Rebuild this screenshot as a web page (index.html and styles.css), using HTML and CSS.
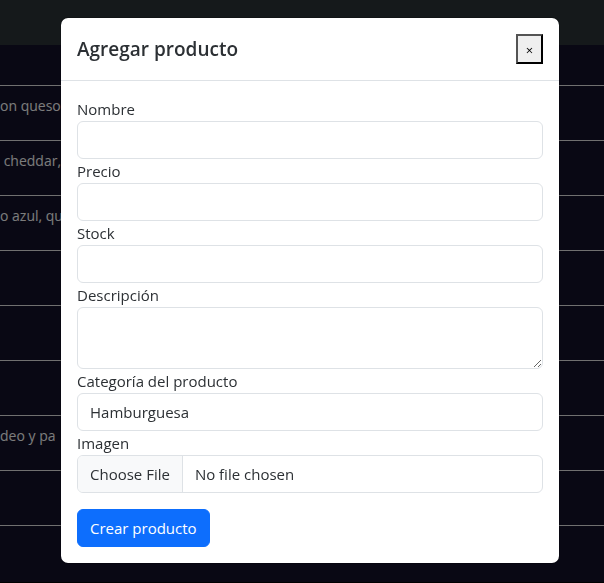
FILE: index.html
```html
<!DOCTYPE html>
<html lang="es">
<head>
<meta charset="utf-8">
<meta name="viewport" content="width=device-width, initial-scale=1">
<title>Agregar producto</title>
<link rel="stylesheet" href="styles.css">
</head>
<body>
<div class="page">
  <header class="navbar"></header>
  <table class="products">
    <tbody>
      <tr><td></td></tr>
      <tr><td>on queso</td></tr>
      <tr><td>&nbsp;cheddar,</td></tr>
      <tr><td>o azul, qu</td></tr>
      <tr><td></td></tr>
      <tr><td></td></tr>
      <tr><td></td></tr>
      <tr><td>deo y pa</td></tr>
      <tr><td></td></tr>
      <tr><td></td></tr>
    </tbody>
  </table>
</div>
<div class="backdrop">
  <section class="modal" role="dialog" aria-labelledby="modal-title">
    <div class="modal-header">
      <h5 class="modal-title" id="modal-title">Agregar producto</h5>
      <button type="button" class="close">×</button>
    </div>
    <form class="modal-body">
      <label for="nombre">Nombre</label>
      <input class="control" type="text" id="nombre">
      <label for="precio">Precio</label>
      <input class="control" type="text" id="precio">
      <label for="stock">Stock</label>
      <input class="control" type="text" id="stock">
      <label for="descripcion">Descripción</label>
      <textarea class="control" id="descripcion" rows="2"></textarea>
      <label for="categoria">Categoría del producto</label>
      <select class="control" id="categoria">
        <option>Hamburguesa</option>
      </select>
      <label for="imagen">Imagen</label>
      <input class="control" type="file" id="imagen">
      <button type="submit" class="submit">Crear producto</button>
    </form>
  </section>
</div>
</body>
</html>
```
FILE: styles.css
```css
* {
  box-sizing: border-box;
}

body {
  margin: 0;
  background: #000;
  color: #2c3034;
  font: 15px/24px "Segoe UI", "Open Sans", sans-serif;
}

.page {
  height: 100vh;
  overflow: hidden;
}

.navbar {
  height: 45px;
  background: #2a3236;
}

.products {
  width: 100%;
  border-collapse: separate;
  border-spacing: 0;
  background: #121028;
  color: #f8f8f8;
  font-size: 14px;
}

.products td {
  height: 55px;
  padding: 8px 0;
  border-bottom: 1px solid #e0e0e0;
  vertical-align: top;
  white-space: nowrap;
}

.products tr:first-child td {
  height: 41px;
}

.products tr:last-child td {
  height: 56px;
  border-bottom: 0;
}

.backdrop {
  position: fixed;
  inset: 0;
  padding: 17px 44px 0 60px;
  background: rgba(0, 0, 0, 0.5);
  overflow: hidden;
}

.modal {
  max-width: 500px;
  margin: 0 auto;
  background: #fff;
  background-clip: padding-box;
  border: 1px solid rgba(0, 0, 0, 0.18);
  border-radius: 8px;
}

.modal-header {
  display: flex;
  align-items: center;
  justify-content: space-between;
  padding: 16px;
  border-bottom: 1px solid #dee2e6;
}

.modal-title {
  margin: 0;
  font-size: 19px;
  line-height: 30px;
  font-weight: 600;
}

.close {
  width: 27px;
  height: 30px;
  padding: 2px 0 0;
  border: 2px outset #000;
  background: #efefef;
  color: #000;
  font: 13px/24px "Segoe UI", "Open Sans", sans-serif;
}

.modal-body {
  display: flex;
  flex-direction: column;
  padding: 16px;
}

.control {
  display: block;
  width: 100%;
  height: 38px;
  margin: 0;
  padding: 6px 12px;
  border: 1px solid #dee2e6;
  border-radius: 6px;
  background: #fff;
  color: #2c3034;
  font: inherit;
  appearance: none;
}

textarea.control {
  height: 62px;
  resize: vertical;
}

.control::file-selector-button {
  margin: -6px 12px -6px -12px;
  padding: 6px 12px;
  border: 0;
  border-right: 1px solid #dee2e6;
  background: #f8f9fa;
  color: #2c3034;
  font: inherit;
}

input[type="file"] {
  overflow: hidden;
}

.submit {
  align-self: flex-start;
  margin-top: 16px;
  padding: 6px 12px;
  border: 1px solid #0d6efd;
  border-radius: 6px;
  background: #0d6efd;
  color: #fff;
  font: inherit;
}
```
